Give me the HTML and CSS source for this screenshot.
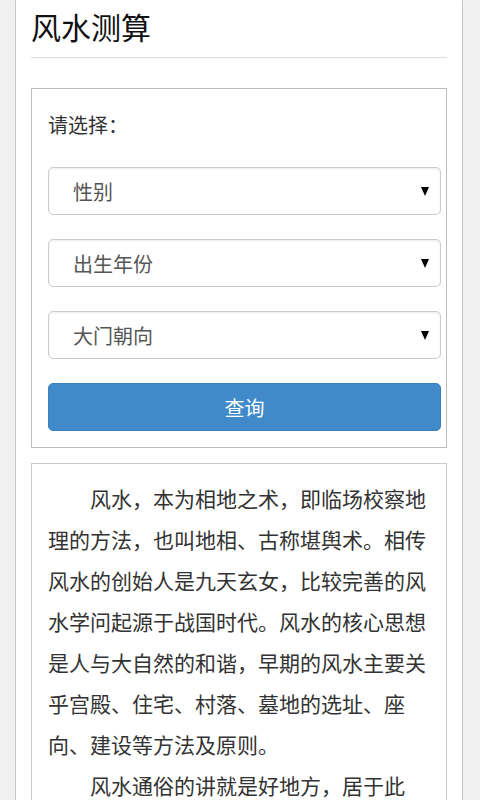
FILE: index.html
```html
<!DOCTYPE html>
<html lang="zh-CN">
<head>
<meta charset="utf-8">
<title>风水测算</title>
<link rel="stylesheet" href="styles.css">
</head>
<body>
<div class="panel">
  <div class="header">风水测算</div>
  <form class="form-box">
    <div class="label">请选择：</div>
    <select class="field">
      <option>性别</option>
      <option>男</option>
      <option>女</option>
    </select>
    <select class="field">
      <option>出生年份</option>
    </select>
    <select class="field">
      <option>大门朝向</option>
    </select>
    <button type="button" class="btn">查询</button>
  </form>
  <div class="text-box">
    <p>风水，本为相地之术，即临场校察地理的方法，也叫地相、古称堪舆术。相传风水的创始人是九天玄女，比较完善的风水学问起源于战国时代。风水的核心思想是人与大自然的和谐，早期的风水主要关乎宫殿、住宅、村落、墓地的选址、座向、建设等方法及原则。</p>
    <p>风水通俗的讲就是好地方，居于此地，可以使人身体健康、家庭和睦、事业兴旺。</p>
  </div>
</div>
</body>
</html>
```

FILE: styles.css
```css
html, body {
  margin: 0;
  padding: 0;
}
body {
  background: #f0f0f0;
  font-family: "Noto Sans CJK SC", "Noto Sans", sans-serif;
  color: #333;
}
.panel {
  margin: -5px 17px 0 15px;
  background: #fff;
  border: 1px solid #c8c8c8;
  border-radius: 6px;
  padding: 10px 15px 20px 15px;
  min-height: 900px;
}
.header {
  font-size: 30px;
  line-height: 40px;
  color: #111;
  padding-bottom: 11px;
  border-bottom: 1px solid #dcdcdc;
}
.form-box {
  margin: 30px 0 0 0;
  border: 1px solid #bdbdbd;
  padding: 21px 5px 16px 16px;
  display: flex;
  flex-direction: column;
}
.label {
  font-size: 20px;
  line-height: 30px;
  color: #333;
  margin-bottom: 27px;
}
.field {
  appearance: none;
  -webkit-appearance: none;
  height: 48px;
  margin: 0 0 24px 0;
  border: 1px solid #ccc;
  border-radius: 5px;
  box-shadow: inset 0 1px 2px rgba(0,0,0,0.08);
  background: #fff url("data:image/svg+xml,%3Csvg xmlns='http://www.w3.org/2000/svg' width='8' height='9'%3E%3Cpath d='M0 0H8L4 9Z' fill='%23000'/%3E%3C/svg%3E") no-repeat right 11px center;
  font-family: inherit;
  font-size: 20px;
  color: #555;
  padding: 0 24px;
  outline: none;
}
.btn {
  height: 48px;
  border: 1px solid #3a80bf;
  border-radius: 5px;
  background: #408ac9;
  color: #fff;
  font-family: inherit;
  font-size: 20px;
  padding: 0;
}
.text-box {
  margin-top: 15px;
  border: 1px solid #c8c8c8;
  padding: 14px 16px 16px 16px;
}
.text-box p {
  margin: 0;
  font-size: 21px;
  line-height: 41px;
  text-indent: 2em;
  color: #333;
}
```
